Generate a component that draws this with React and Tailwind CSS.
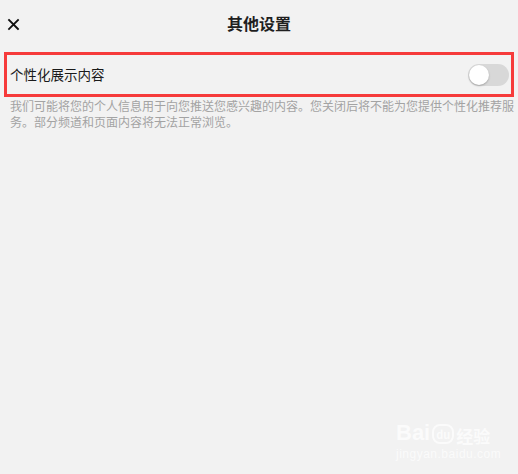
import { useState } from 'react';

export default function App() {
  const [enabled, setEnabled] = useState(false);

  return (
    <div
      className="relative h-[474px] w-[518px] overflow-hidden bg-[#f2f2f2] text-[#1a1a1a]"
      style={{ fontFamily: '"Noto Sans CJK SC", "Noto Sans", sans-serif' }}
    >
      <header className="relative flex h-[46px] items-center justify-center">
        <button className="absolute left-[7px] top-[18px] flex h-[13px] w-[13px] items-center justify-center" aria-label="关闭">
          <svg width="13" height="13" viewBox="0 0 13 13" fill="none" stroke="#111" strokeWidth="1.8" strokeLinecap="square">
            <path d="M2 2 L11 11 M11 2 L2 11" />
          </svg>
        </button>
        <h1 className="text-[16px] font-bold leading-none text-[#1f1f1f]">其他设置</h1>
      </header>

      <div className="mx-[4px] mt-[6px] flex h-[45px] items-center justify-between border-[3px] border-[#f63b3b] pl-[3px] pr-[2px]">
        <span className="text-[13.5px] leading-none">个性化展示内容</span>
        <button
          onClick={() => setEnabled(!enabled)}
          className={`flex h-[22px] w-[41px] items-center rounded-full p-[1px] ${enabled ? 'justify-end bg-[#4cd964]' : 'justify-start bg-[#d8d8d8]'}`}
        >
          <span className="h-[20px] w-[20px] rounded-full bg-white shadow-[0_1px_2px_rgba(0,0,0,0.25)]"></span>
        </button>
      </div>

      <p className="mt-[1px] pl-[10px] text-[12px] leading-[16px] whitespace-nowrap text-[#a3a3a3]">
        我们可能将您的个人信息用于向您推送您感兴趣的内容。您关闭后将不能为您提供个性化推荐服
        <br />
        务。部分频道和页面内容将无法正常浏览。
      </p>

      <div className="pointer-events-none absolute left-[396px] top-[422px] flex flex-col items-start text-white opacity-70">
        <div className="flex items-end gap-[2px]">
          <span className="text-[22px] font-bold leading-none" style={{ fontFamily: '"Liberation Sans", sans-serif' }}>Bai</span>
          <span className="flex h-[20px] w-[22px] items-center justify-center rounded-[8px] border-2 border-white text-[11px] font-bold leading-none">du</span>
          <span className="text-[17px] font-bold leading-none">经验</span>
        </div>
        <span className="mt-[4px] text-[12px] leading-none tracking-[0.5px]" style={{ fontFamily: '"Liberation Sans", sans-serif' }}>jingyan.baidu.com</span>
      </div>
    </div>
  );
}
